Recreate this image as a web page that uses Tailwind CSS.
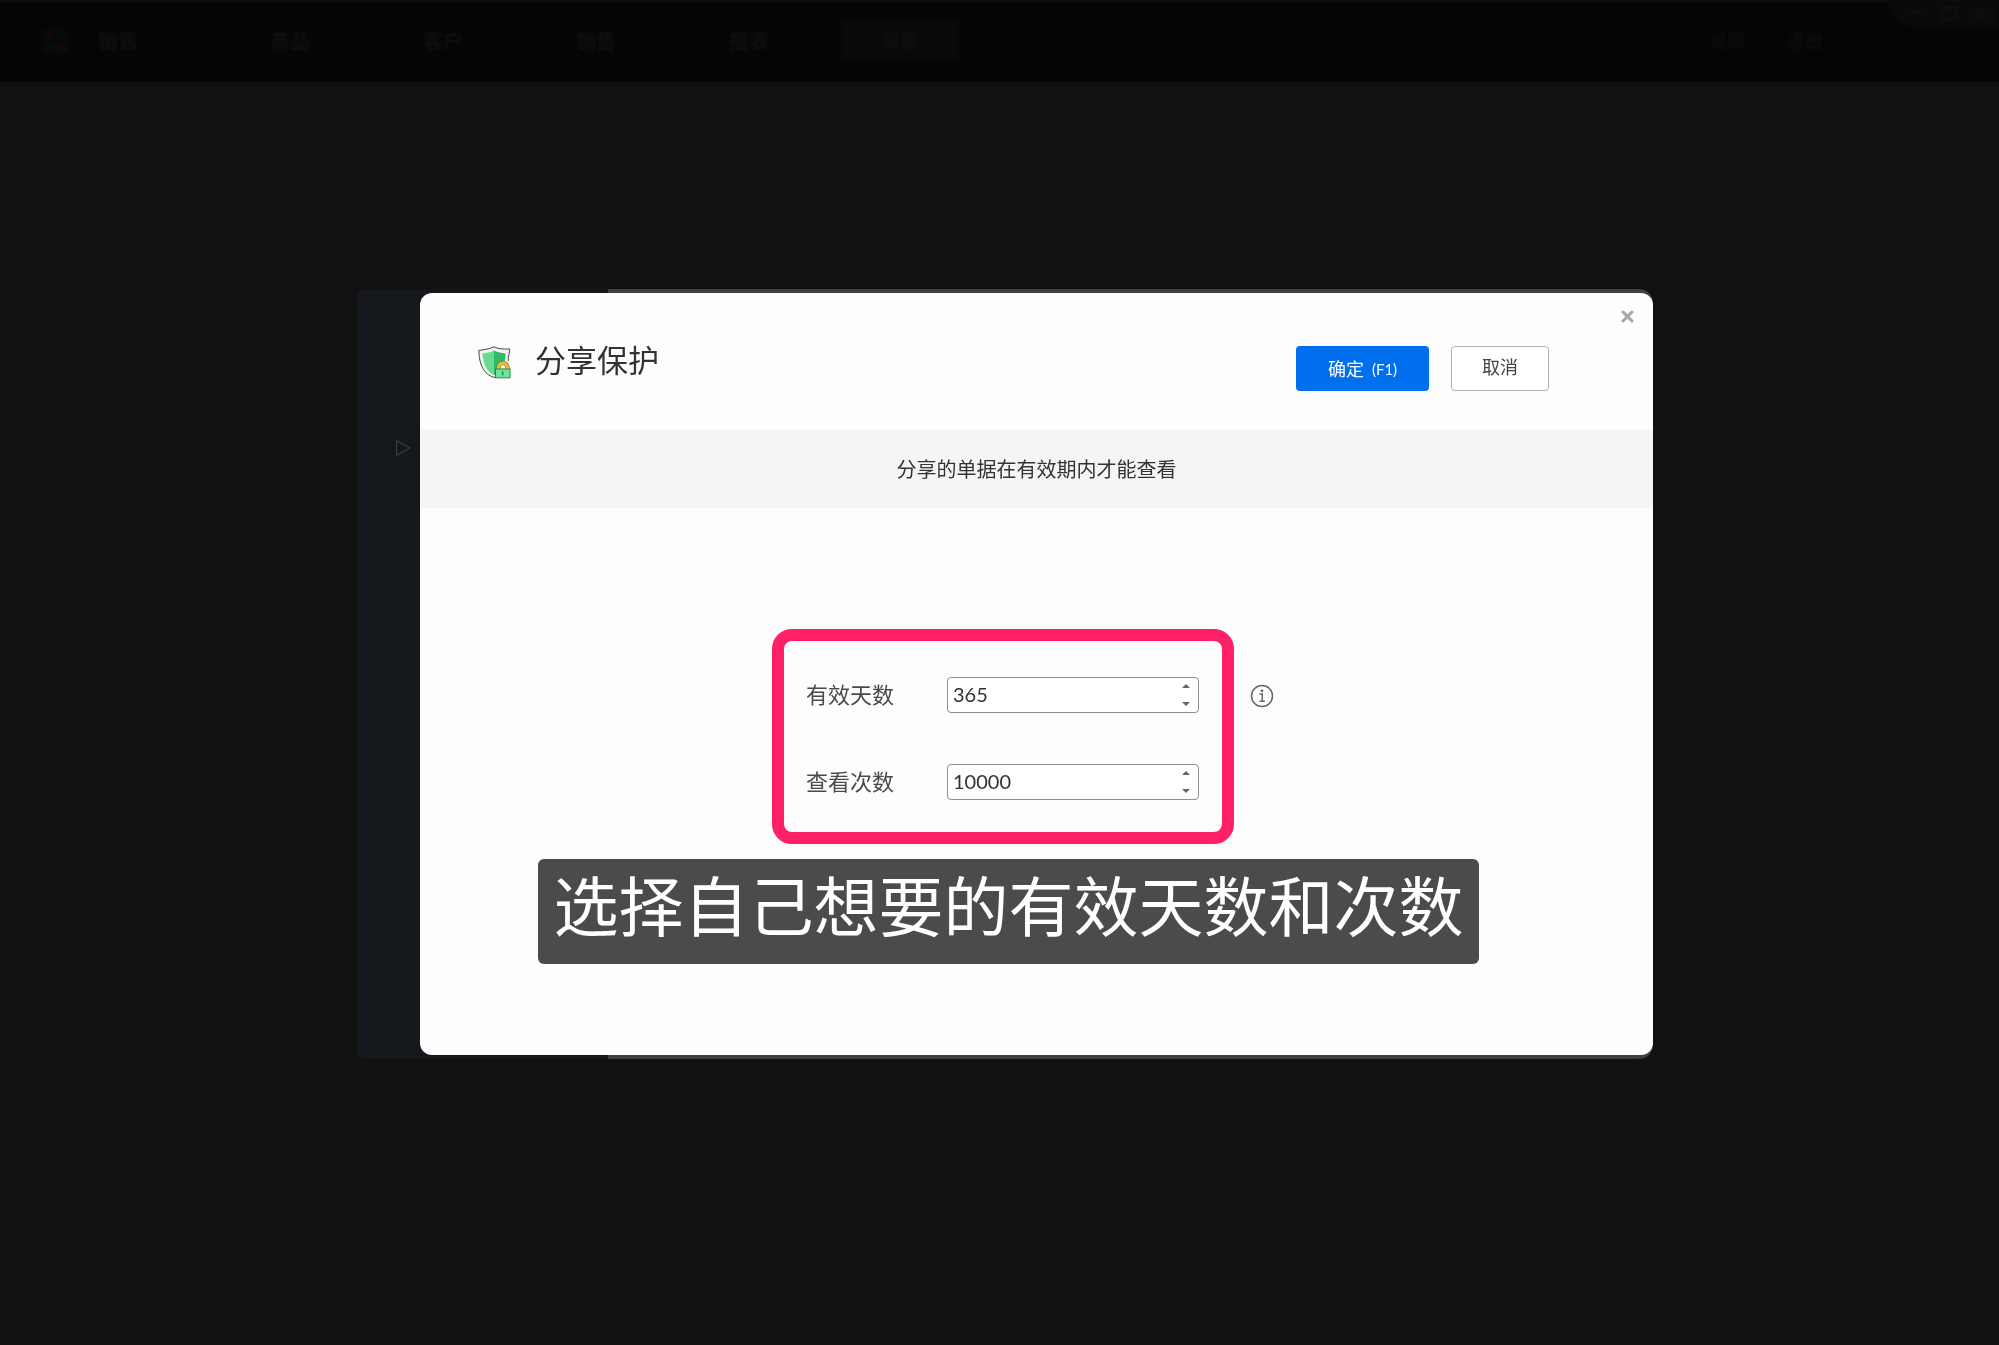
<!DOCTYPE html>
<html lang="zh-CN">
<head>
  <meta charset="UTF-8">
  <meta name="viewport" content="width=device-width, initial-scale=1.0">
  <title>分享保护</title>
  <script src="https://cdn.jsdelivr.net/npm/@tailwindcss/browser@4"></script>
</head>
<body class="min-h-screen bg-[#111111] font-['Lato','Noto_Sans_CJK_SC',sans-serif]">

  <!-- Top bar, dimmed behind the dialog -->
  <header class="h-[82px] border-t-2 border-[#0d0d0d] bg-[#050505] text-[20px] font-bold text-[#101010]">
    <div class="flex h-[78px] items-start blur-[1px]">
      <div class="flex h-full w-[192px] items-center pl-[42px]">
        <svg class="h-[26px] w-[26px]" viewBox="0 0 26 26" aria-hidden="true">
          <rect x="1" y="1" width="11" height="11" fill="#0c0806"/>
          <rect x="14" y="1" width="11" height="11" fill="#040b09"/>
          <rect x="1" y="14" width="11" height="11" fill="#050a0d"/>
          <rect x="14" y="14" width="11" height="11" fill="#0c0b06"/>
          <path d="M9 5H5v5h8v8H8" fill="none" stroke="#0b0b0b" stroke-width="2"/>
        </svg>
        <span class="ml-[30px]">销售</span>
      </div>
      <nav class="flex h-full flex-1 items-center pl-[22px]">
        <a href="#" class="w-[153px] pl-14">商品</a>
        <a href="#" class="w-[153px] pl-14">客户</a>
        <a href="#" class="w-[153px] pl-14">销售</a>
        <a href="#" class="w-[153px] pl-14">报表</a>
        <a href="#" class="ml-[15px] flex h-[42px] w-[118px] items-center justify-center bg-[#090909] text-[18px]">设置</a>
      </nav>
      <div class="flex h-full w-[450px] items-start">
        <div class="flex h-full items-center gap-[42px] pl-[160px] text-[18px] text-[#0d0d0d]">
          <a href="#">说明</a>
          <a href="#">退出</a>
        </div>
        <svg class="ml-auto h-[24px] w-[114px]" viewBox="0 0 114 24" fill="none" stroke="#111111" stroke-width="2" aria-hidden="true">
          <path d="M0 0C8 4 8 24 26 24H114V0Z" fill="#0a0a0a" stroke="none"/>
          <path d="M27 9H40M58 6h13v11H58ZM89 6l11 11M100 6L89 17"/>
        </svg>
      </div>
    </div>
  </header>

  <!-- Settings window with the dialog on top -->
  <div class="fixed inset-0 flex items-center justify-center pt-[3px] pl-[11px]">
    <div class="flex w-[1296px] items-start rounded-[14px] rounded-l-[6px] bg-linear-to-r from-[#14181c] from-[251px] to-[#404040] to-[251px] py-1">

      <div class="flex w-[63px] justify-end pt-[146px] pr-2">
        <svg class="h-[18px] w-[17px]" viewBox="0 0 17 18" fill="none" stroke="#3c3f42" stroke-width="1.2" stroke-linejoin="round" aria-hidden="true">
          <path d="M1.5 1.500V16.500L15 9Z"/>
        </svg>
      </div>

      <section role="dialog" aria-labelledby="dialog-title" class="relative flex-1 overflow-hidden rounded-xl bg-[#fdfdfd]">
        <button type="button" aria-label="关闭" class="absolute top-4 right-[18px] p-px">
          <svg class="h-[13px] w-[13px]" viewBox="0 0 13 13" fill="none" stroke="#a6a6a6" stroke-width="3" stroke-linecap="round">
            <path d="M2 2L11 11M11 2L2 11"/>
          </svg>
        </button>

        <div class="flex h-[137px] items-start pt-[53px] pr-[104px] pl-[58px]">
          <svg class="h-[33px] w-[33px]" viewBox="0 0 33 33" aria-hidden="true">
            <path d="M16 .8C19 2.500 25 3 31.500 3C31.500 7 30 9 30.500 14L31 31H17C9 29 1 22 .8 4.500C6 3.500 11 3 16 .8Z" fill="#f4f4ec"/>
            <path d="M30.300 15C30 10 31.800 7 31.600 3C26 3.200 20 3 16 .8C11 3.200 6 3.500 .8 4.500C1 21 8 30 17 31.500" fill="none" stroke="#45494b" stroke-width="1"/>
            <path d="M16 4.500C12.500 6.500 8.500 7 4.500 7.500C5 18 9 26 16 29Z" fill="#68dc8e"/>
            <path d="M16 4.500C19.500 6.500 23.500 7 27.500 7.500C27.500 18 24 26 16 29Z" fill="#31b968"/>
            <path d="M20.500 23V21.500A4.500 4.500 0 0 1 29.500 21.500V23" fill="#e8f6df" stroke="#846b22" stroke-width="4.200"/>
            <path d="M20.500 23V21.500A4.500 4.500 0 0 1 29.500 21.500V23" fill="none" stroke="#eebd3b" stroke-width="3"/>
            <rect x="17.500" y="23" width="14.500" height="8.800" fill="#6fe59a" stroke="#27864b" stroke-width="1"/>
            <path d="M24.700 25.300V29.200" stroke="#2b9654" stroke-width="1.800"/>
          </svg>
          <h1 id="dialog-title" class="ml-6 text-[31px] leading-7 text-[#333333]">分享保护</h1>
          <button type="button" class="ml-auto flex h-[45px] w-[133px] items-center justify-center gap-2 rounded-[4px] bg-[#006fee] pt-0.5 text-[18px] text-white">
            确定 <span class="text-[15px]">(F1)</span>
          </button>
          <button type="button" class="ml-[22px] h-[45px] w-[98px] rounded-[4px] border border-[#b0b0b0] bg-white pb-0.5 text-[18px] text-[#444444]">取消</button>
        </div>

        <p class="flex h-[78px] items-center justify-center bg-[#f5f5f5] text-[20px] text-[#333333]">分享的单据在有效期内才能查看</p>

        <form class="flex flex-col pt-[121px] pb-[91px]">
          <div class="ml-[352px] flex">
            <div class="flex w-[462px] flex-col gap-[51px] rounded-[20px] border-[12px] border-[#ff2068] pt-9 pb-8 pl-[22px]">
              <div class="flex items-center">
                <label for="days" class="w-[141px] text-[22px] leading-[34px] text-[#4a4a4a]">有效天数</label>
                <div class="relative">
                  <input id="days" type="number" value="365" class="block h-9 w-[252px] rounded-[4px] border border-[#8f8f8f] bg-white px-[5px] pb-0.5 text-[20px] text-[#333333] [appearance:textfield]">
                  <svg class="absolute top-[7px] right-[9px] h-[22px] w-[8px]" viewBox="0 0 8 22" fill="#666666" aria-hidden="true">
                    <path d="M4 0L8 4H0ZM4 22L0 18H8Z"/>
                  </svg>
                </div>
              </div>
              <div class="flex items-center">
                <label for="views" class="w-[141px] text-[22px] leading-[34px] text-[#4a4a4a]">查看次数</label>
                <div class="relative">
                  <input id="views" type="number" value="10000" class="block h-9 w-[252px] rounded-[4px] border border-[#8f8f8f] bg-white px-[5px] pb-0.5 text-[20px] text-[#333333] [appearance:textfield]">
                  <svg class="absolute top-[7px] right-[9px] h-[22px] w-[8px]" viewBox="0 0 8 22" fill="#666666" aria-hidden="true">
                    <path d="M4 0L8 4H0ZM4 22L0 18H8Z"/>
                  </svg>
                </div>
              </div>
            </div>
            <button type="button" aria-label="说明" class="mt-[55px] ml-4 h-6 w-6">
              <svg class="h-6 w-6" viewBox="0 0 24 24" fill="none" stroke="#666666" stroke-width="1.500">
                <circle cx="12" cy="12" r="10.500"/>
                <path d="M9.500 10H12.300V17M9.500 17.300H14.800" stroke-width="1.400"/>
                <circle cx="12" cy="6.800" r="1.400" fill="#666666" stroke="none"/>
              </svg>
            </button>
          </div>

          <!-- Caption -->
          <p class="mt-[15px] ml-[118px] h-[105px] w-[941px] rounded-[6px] bg-[#4b4b4b] text-center text-[65px] leading-[94px] text-white">选择自己想要的有效天数和次数</p>
        </form>
      </section>
    </div>
  </div>

</body>
</html>
